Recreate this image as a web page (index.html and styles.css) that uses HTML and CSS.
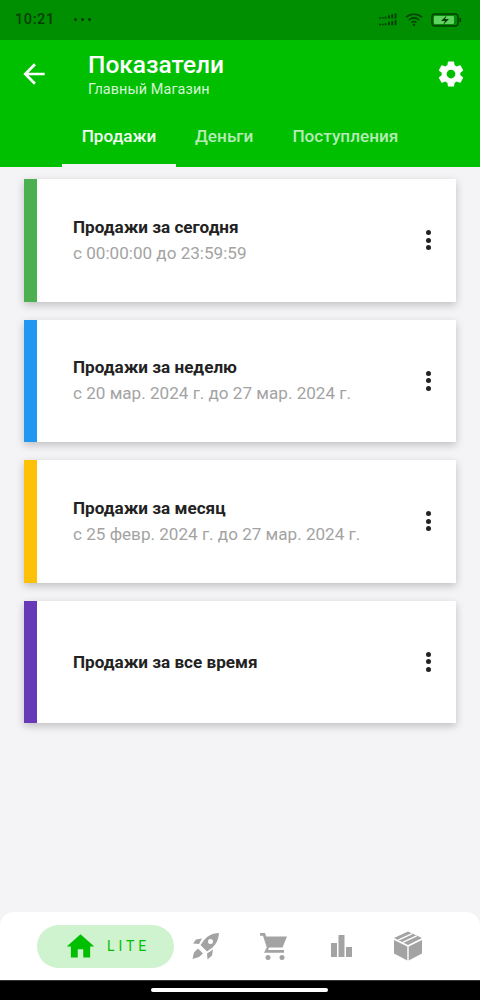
FILE: index.html
```html
<!DOCTYPE html>
<html lang="ru">
<head>
<meta charset="utf-8">
<title>Показатели</title>
<link rel="stylesheet" href="styles.css">
</head>
<body>
<div class="screen">
  <div class="statusbar">
    <span class="time">10:21</span>
    <span class="dots"><i></i><i></i><i></i></span>
    <span class="status-icons">
      <svg class="ic-signal" width="18" height="13" viewBox="0 0 19 13"><g fill="#063f06"><rect x="0" y="4" width="2" height="1.5"/><rect x="3" y="4" width="2" height="1.5"/><rect x="6" y="3.500" width="2" height="2"/><rect x="9.500" y="2" width="2" height="3.500"/><rect x="13" y="1" width="2" height="4.500"/><rect x="16.500" y="0" width="2" height="5.500"/><rect x="0" y="11" width="2" height="1.500"/><rect x="3" y="11" width="2" height="1.500"/><rect x="6" y="10.500" width="2" height="2"/><rect x="9.500" y="9" width="2" height="3.500"/><rect x="13" y="8" width="2" height="4.500"/><rect x="16.500" y="7" width="2" height="5.500"/></g></svg>
      <svg class="ic-wifi" width="18" height="13" viewBox="0 0 18 13"><g fill="none" stroke="#063f06" stroke-width="1.500"><path d="M1 4.200C5.500 .2 12.500 .2 17 4.200"/><path d="M3.800 7C7 4.400 11 4.400 14.200 7"/><path d="M6.500 9.500C8 8.400 10 8.400 11.500 9.500"/></g><circle cx="9" cy="11.700" r="1.200" fill="#063f06"/></svg>
      <svg class="ic-battery" width="31" height="14" viewBox="0 0 31 14"><rect x="1" y="1" width="26" height="12" rx="3" fill="none" stroke="#063f06" stroke-width="1.600"/><rect x="3" y="3" width="20" height="8" rx="1" fill="#5fd35f"/><rect x="28.500" y="5" width="1.500" height="4" fill="#063f06"/><path d="M16 2 10 8h4l-2 4 6-6h-4z" fill="#063f06"/></svg>
    </span>
  </div>

  <header class="appbar">
    <div class="appbar-top">
      <svg class="ic-back" width="32" height="32" viewBox="0 0 24 24"><path d="M20 11H7.830l5.590-5.590L12 4l-8 8 8 8 1.410-1.410L7.830 13H20z" fill="#fff"/></svg>
      <div class="titles">
        <div class="title">Показатели</div>
        <div class="subtitle">Главный Магазин</div>
      </div>
      <svg class="ic-gear" width="30" height="30" viewBox="0 0 24 24"><path d="M19.430 12.980c.04-.32.070-.64.070-.98s-.03-.66-.07-.98l2.110-1.650c.19-.15.240-.42.120-.64l-2-3.460c-.12-.22-.39-.3-.61-.22l-2.490 1c-.52-.4-1.080-.73-1.690-.98l-.38-2.650C14.460 2.180 14.250 2 14 2h-4c-.25 0-.46.18-.49.42l-.38 2.650c-.61.25-1.170.59-1.690.98l-2.490-1c-.23-.09-.49 0-.61.22l-2 3.460c-.13.22-.07.49.12.64l2.110 1.650c-.04.32-.07.65-.07.98s.03.66.07.98l-2.110 1.650c-.19.15-.24.42-.12.64l2 3.460c.12.22.39.3.61.22l2.490-1c.52.4 1.080.73 1.690.98l.38 2.650c.03.24.24.42.49.42h4c.25 0 .46-.18.49-.42l.38-2.650c.61-.25 1.170-.59 1.690-.98l2.490 1c.23.09.49 0 .61-.22l2-3.460c.12-.22.07-.49-.12-.64l-2.110-1.650zM12 15.500c-1.930 0-3.500-1.570-3.500-3.500s1.570-3.500 3.500-3.500 3.500 1.570 3.500 3.500-1.570 3.500-3.500 3.500z" fill="#fff"/></svg>
    </div>
    <nav class="tabs">
      <div class="tab tab-active">Продажи</div>
      <div class="tab tab-money">Деньги</div>
      <div class="tab tab-in">Поступления</div>
    </nav>
  </header>

  <main class="list">
    <section class="card">
      <div class="stripe stripe-green"></div>
      <div class="card-text">
        <div class="card-title">Продажи за сегодня</div>
        <div class="card-sub">с 00:00:00 до 23:59:59</div>
      </div>
      <div class="more"><i></i><i></i><i></i></div>
    </section>
    <section class="card">
      <div class="stripe stripe-blue"></div>
      <div class="card-text">
        <div class="card-title">Продажи за неделю</div>
        <div class="card-sub">с 20 мар. 2024 г. до 27 мар. 2024 г.</div>
      </div>
      <div class="more"><i></i><i></i><i></i></div>
    </section>
    <section class="card">
      <div class="stripe stripe-amber"></div>
      <div class="card-text">
        <div class="card-title">Продажи за месяц</div>
        <div class="card-sub">с 25 февр. 2024 г. до 27 мар. 2024 г.</div>
      </div>
      <div class="more"><i></i><i></i><i></i></div>
    </section>
    <section class="card">
      <div class="stripe stripe-purple"></div>
      <div class="card-text">
        <div class="card-title">Продажи за все время</div>
      </div>
      <div class="more"><i></i><i></i><i></i></div>
    </section>
  </main>

  <footer class="bottom">
    <div class="pill">
      <svg class="ic-home" width="33" height="33" viewBox="0 0 24 24"><path d="M10 20v-6h4v6h5v-8h3L12 3 2 12h3v8z" fill="#00bf00"/></svg>
      <span class="pill-label">LITE</span>
    </div>
    <svg class="nav-ic nav-rocket" width="30" height="30" viewBox="0 0 30 30"><g fill="#a3a3a3"><path d="M28 2c-6 .3-11 2.500-14.500 6.500l-4 5.500 6.500 6.500 5.500-4C25.500 13 27.700 8 28 2zM19.500 8a2.500 2.500 0 1 1 0 5 2.500 2.500 0 0 1 0-5z" fill-rule="evenodd"/><path d="M11 7.500 5 8.500l-3 4 6 .5z"/><path d="M22 18.500l-1 6-4.500 4-.5-6z"/><path d="M7 17.500l5 5-4 3.500-6.500 2 1.500-6.500z"/></g></svg>
    <svg class="nav-ic nav-cart" width="30" height="30" viewBox="0 0 30 30"><g fill="#a3a3a3"><path d="M1 2h5l1.200 3.500H28l-4.500 11H10l-1 2.500h16v2.800H5l2.800-5.300L4 4.800H1z"/><circle cx="9" cy="26.500" r="2.500"/><circle cx="23" cy="26.500" r="2.500"/></g></svg>
    <svg class="nav-ic nav-bars" width="24" height="24" viewBox="0 0 24 24"><g fill="#a3a3a3"><rect x="1" y="9" width="6" height="14"/><rect x="8.500" y="1" width="6" height="22"/><rect x="16" y="13" width="6" height="10"/></g></svg>
    <svg class="nav-ic nav-box" width="28" height="30" viewBox="0 0 28 30"><path d="M14 .5 28 7 14 14 0 7z" fill="#a3a3a3"/><path d="M4.200 9.100 18.200 2.600M8.700 11.300 22.700 4.800" fill="none" stroke="#fff" stroke-width="1.300"/><path d="M0 9 13.300 15.500V29.500L0 22.500zM28 9V22.500L14.700 29.500V15.500z" fill="#a3a3a3"/></svg>
  </footer>
  <div class="navbar"><div class="home-ind"></div></div>
</div>
</body>
</html>
```

FILE: styles.css
```css
* { box-sizing: border-box; }
html, body { margin: 0; padding: 0; }
body { font-family: Roboto, "Noto Sans", sans-serif; background: #f4f4f7; }
.screen { width: 480px; height: 1000px; display: flex; flex-direction: column; overflow: hidden; background: #f4f4f7; }

.statusbar { height: 40px; flex: none; background: #008f00; display: flex; align-items: center; padding: 0 18px 1px 15px; }
.time { font-size: 14.500px; font-weight: 500; color: #063f06; letter-spacing: .6px; }
.dots { display: flex; gap: 4px; margin-left: 19px; }
.dots i { width: 3px; height: 3px; border-radius: 50%; background: #063f06; }
.status-icons { margin-left: auto; display: flex; align-items: center; gap: 8px; }

.appbar { flex: none; height: 127px; background: #00bf00; color: #fff; display: flex; flex-direction: column; }
.appbar-top { display: flex; align-items: flex-start; height: 73px; padding: 0 14px 0 18px; }
.ic-back { margin-top: 18px; flex: none; }
.titles { margin-left: 38px; padding-top: 10px; flex: 1; }
.title { font-size: 24.500px; font-weight: 500; line-height: 30px; }
.subtitle { font-size: 14.400px; line-height: 20px; color: #d6f5d6; letter-spacing: .1px; }
.ic-gear { margin-top: 19px; flex: none; }

.tabs { display: flex; height: 54px; padding-left: 62px; }
.tab { font-size: 17.200px; font-weight: 500; line-height: 46px; color: #b5ecb5; text-align: center; }
.tab-active { width: 114px; color: #f0fcf0; border-bottom: 3px solid #f4f4f8; height: 54px; margin-right: 19px; }
.tab-money { margin-right: 39px; }

.list { flex: 1; display: flex; flex-direction: column; gap: 18px; padding: 12px 24px 0; }
.card { height: 122.500px; background: #fff; display: flex; align-items: stretch; box-shadow: 0 3px 8px rgba(0,0,0,.22); flex: none; }
.stripe { width: 13px; flex: none; }
.stripe-green { background: #4caf50; }
.stripe-blue { background: #2196f3; }
.stripe-amber { background: #ffc107; }
.stripe-purple { background: #673ab7; }
.card-text { flex: 1; padding-left: 36px; display: flex; flex-direction: column; justify-content: center; padding-top: 1px; }
.card-title { font-size: 17.100px; font-weight: 700; line-height: 24px; color: #222; }
.card-sub { font-size: 17.100px; line-height: 28px; color: #a3a3a3; }
.more { width: 56px; flex: none; display: flex; flex-direction: column; align-items: center; justify-content: center; gap: 2.500px; }
.more i { width: 5px; height: 5px; border-radius: 50%; background: #222; }

.bottom { flex: none; height: 68px; background: #fff; border-radius: 14px 14px 0 0; display: flex; align-items: center; padding: 0 0 0 37px; }
.pill { width: 137px; height: 43px; border-radius: 22px; background: #cff2cf; display: flex; align-items: center; padding-left: 27px; }
.pill-label { margin-left: 10px; font-size: 14px; font-weight: 400; color: #00bf00; letter-spacing: 3.900px; }
.nav-ic { flex: none; }
.nav-rocket { margin-left: 17px; }
.nav-cart { margin-left: 38px; }
.nav-bars { margin-left: 41px; }
.nav-box { margin-left: 40px; }

.navbar { flex: none; height: 20px; background: #000; border-top: 1px solid #333; display: flex; justify-content: center; align-items: flex-start; padding: 7px 1px 0 0; }
.home-ind { width: 177px; height: 4px; border-radius: 2px; background: #fff; }
```
